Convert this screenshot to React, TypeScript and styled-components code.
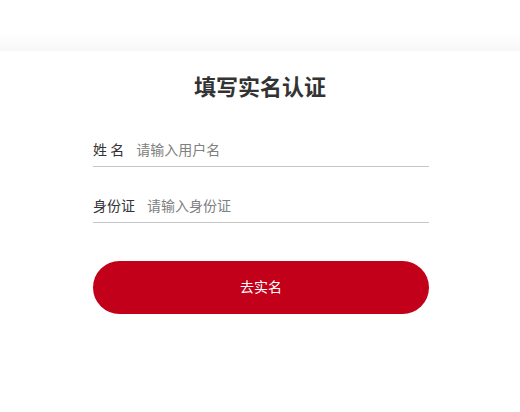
import React from "react";
import styled, { createGlobalStyle } from "styled-components";

const Global = createGlobalStyle`
  html, body { margin: 0; padding: 0; background: #fff; }
  body { font-family: "Noto Sans CJK SC", "Noto Sans", sans-serif; }
  * { box-sizing: border-box; }
`;

const Page = styled.div`
  width: 520px;
  min-height: 412px;
  background: #fff;
  padding-top: 34px;
`;

const Band = styled.div`
  height: 17px;
  background: linear-gradient(#ffffff, #f7f7f7);
`;

const Title = styled.h1`
  margin: 19px 0 0;
  font-size: 22px;
  line-height: 30px;
  font-weight: 700;
  color: #333;
  text-align: center;
`;

const Form = styled.form`
  width: 336px;
  margin: 34px 0 0 93px;
  display: flex;
  flex-direction: column;
  gap: 23px;
`;

const Row = styled.label`
  display: flex;
  align-items: center;
  height: 33px;
  padding-bottom: 3px;
  border-bottom: 1px solid #c6c6c6;
`;

const Label = styled.span`
  font-size: 14px;
  color: #333;
  margin-right: 12px;
  white-space: pre;
`;

const Field = styled.input`
  flex: 1;
  border: 0;
  outline: none;
  padding: 0;
  font-family: inherit;
  font-size: 14px;
  color: #333;
  background: transparent;
  &::placeholder { color: #808080; }
`;

const Submit = styled.button`
  margin-top: 15px;
  height: 53px;
  border: 0;
  border-radius: 27px;
  padding: 0 0 3px;
  background: #c20019;
  color: #fff;
  font-family: inherit;
  font-size: 14px;
  cursor: pointer;
`;

export default function App() {
  return (
    <Page>
      <Global />
      <Band />
      <Title>填写实名认证</Title>
      <Form onSubmit={(e) => e.preventDefault()}>
        <Row>
          <Label>姓 名</Label>
          <Field placeholder="请输入用户名" />
        </Row>
        <Row>
          <Label>身份证</Label>
          <Field placeholder="请输入身份证" />
        </Row>
        <Submit type="submit">去实名</Submit>
      </Form>
    </Page>
  );
}
